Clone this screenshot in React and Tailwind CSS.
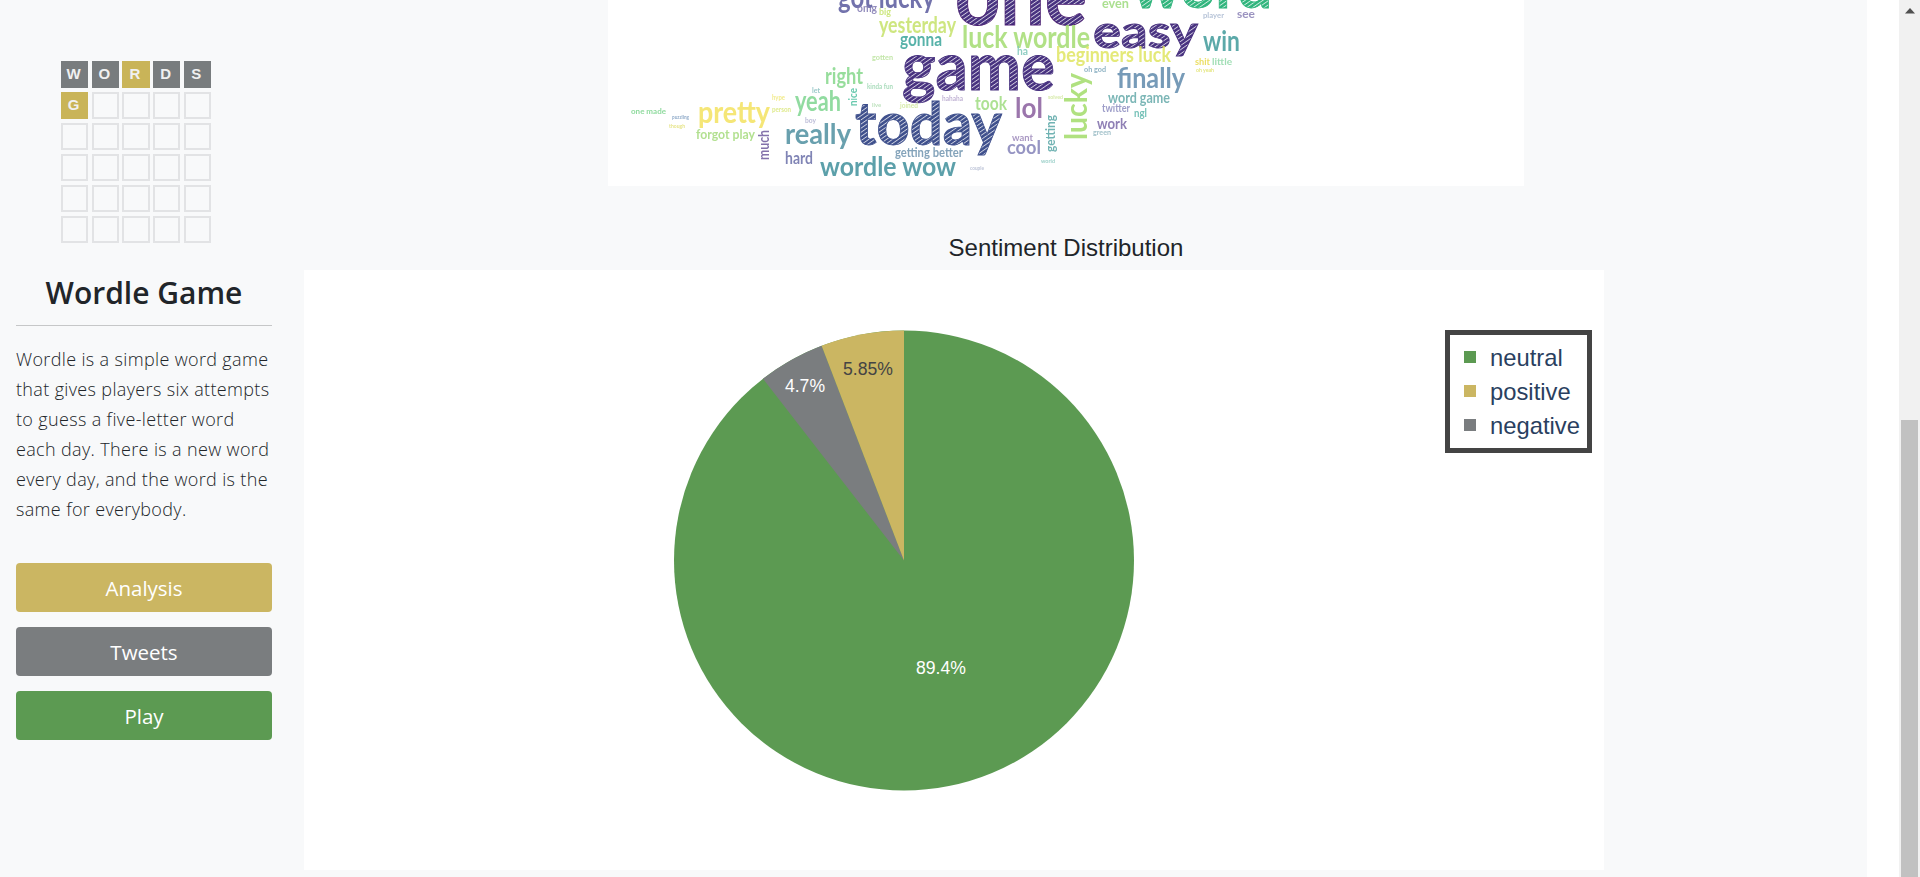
import React from 'react';

const tiles = [
  ['W', 'grey'], ['O', 'grey'], ['R', 'gold'], ['D', 'grey'], ['S', 'grey'],
  ['G', 'gold'],
];

// x, y are page pixels read off the reference, w is the drawn width of the word
const words = [
  { t: 'word', x: 1132, y: 8, w: 140, s: 62, c: '#2fb47c', h: 'green' },
  { t: 'one', x: 955, y: 25, w: 132, s: 84, c: '#471a6e', h: 'violet' },
  { t: 'game', x: 902, y: 90, w: 153, s: 66, c: '#46307f', h: 'violet' },
  { t: 'today', x: 855, y: 145, w: 147, s: 60, c: '#3e4f8c', h: 'blue' },
  { t: 'easy', x: 1093, y: 48, w: 105, s: 46, c: '#48307e', h: 'violet' },
  { t: 'got lucky', x: 838, y: 8, w: 97, s: 26, c: '#5b5a9e' },
  { t: 'even', x: 1102, y: 8, w: 27, s: 11, c: '#9cdb7c' },
  { t: 'omg', x: 857, y: 12, w: 20, s: 9, c: '#7f78b0' },
  { t: 'big', x: 879, y: 15, w: 12, s: 8, c: '#c4e36a' },
  { t: 'yesterday', x: 879, y: 33, w: 77, s: 19, c: '#c5e26a' },
  { t: 'gonna', x: 900, y: 46, w: 42, s: 17, c: '#3aa59a' },
  { t: 'luck wordle', x: 962, y: 48, w: 128, s: 26, c: '#a3dc72' },
  { t: 'win', x: 1203, y: 51, w: 37, s: 24, c: '#3f9a9a' },
  { t: 'see', x: 1237, y: 18, w: 18, s: 10, c: '#8a80b5' },
  { t: 'player', x: 1203, y: 18, w: 21, s: 7, c: '#a9b8d0' },
  { t: 'ha', x: 1017, y: 55, w: 11, s: 9, c: '#7cc5b8' },
  { t: 'beginners luck', x: 1056, y: 62, w: 115, s: 18, c: '#dfe560' },
  { t: 'shit', x: 1195, y: 65, w: 15, s: 8, c: '#e8d848' },
  { t: 'little', x: 1212, y: 65, w: 20, s: 8, c: '#8fd8a8' },
  { t: 'gotten', x: 872, y: 60, w: 21, s: 6, c: '#b9e29a' },
  { t: 'oh god', x: 1084, y: 72, w: 22, s: 6, c: '#7aa5b8' },
  { t: 'oh yeah', x: 1196, y: 72, w: 18, s: 5, c: '#dfe26a' },
  { t: 'right', x: 825, y: 84, w: 38, s: 19, c: '#85d78b' },
  { t: 'finally', x: 1117, y: 88, w: 68, s: 25, c: '#5f8aab' },
  { t: 'kinda fun', x: 867, y: 89, w: 26, s: 6, c: '#9bd6b0' },
  { t: 'let', x: 812, y: 93, w: 8, s: 6, c: '#8ac0c0' },
  { t: 'hype', x: 772, y: 100, w: 13, s: 6, c: '#f0e878' },
  { t: 'word game', x: 1108, y: 103, w: 62, s: 13, c: '#64a9a9' },
  { t: 'hahaha', x: 942, y: 101, w: 21, s: 6, c: '#b6a6cc' },
  { t: 'solved', x: 1048, y: 99, w: 15, s: 5, c: '#cfe69a' },
  { t: 'live', x: 872, y: 107, w: 9, s: 5, c: '#b0dcb0' },
  { t: 'joined', x: 900, y: 108, w: 18, s: 6, c: '#cfe69a' },
  { t: 'took', x: 975, y: 110, w: 32, s: 16, c: '#9fdc80' },
  { t: 'yeah', x: 795, y: 111, w: 46, s: 24, c: '#7ed58f' },
  { t: 'person', x: 772, y: 112, w: 19, s: 6, c: '#d9e67a' },
  { t: 'twitter', x: 1102, y: 112, w: 28, s: 9, c: '#8d8dc0' },
  { t: 'one made', x: 631, y: 114, w: 35, s: 7, c: '#7ad48c' },
  { t: 'ngl', x: 1134, y: 117, w: 13, s: 9, c: '#5bb5a9' },
  { t: 'puzzling', x: 672, y: 119, w: 17, s: 4, c: '#7d9cc0' },
  { t: 'lol', x: 1015, y: 118, w: 28, s: 24, c: '#8a5e9e' },
  { t: 'pretty', x: 698, y: 123, w: 72, s: 27, c: '#f3e25f' },
  { t: 'boy', x: 805, y: 123, w: 11, s: 6, c: '#b0b0d0' },
  { t: 'though', x: 669, y: 128, w: 16, s: 4, c: '#e2df74' },
  { t: 'work', x: 1097, y: 129, w: 30, s: 13, c: '#7b6aa8' },
  { t: 'green', x: 1093, y: 135, w: 18, s: 7, c: '#8fb5c0' },
  { t: 'forgot play', x: 696, y: 139, w: 59, s: 12, c: '#a5db7c' },
  { t: 'want', x: 1012, y: 141, w: 21, s: 8, c: '#9a86b8' },
  { t: 'really', x: 785, y: 144, w: 66, s: 25, c: '#4f8fa0' },
  { t: 'cool', x: 1007, y: 154, w: 34, s: 17, c: '#8482b8' },
  { t: 'getting better', x: 895, y: 157, w: 68, s: 11, c: '#6f93ae' },
  { t: 'world', x: 1041, y: 163, w: 14, s: 5, c: '#8ac8c0' },
  { t: 'hard', x: 785, y: 164, w: 28, s: 15, c: '#6a6ea8' },
  { t: 'couple', x: 970, y: 170, w: 14, s: 4, c: '#b0b8d0' },
  { t: 'wordle wow', x: 820, y: 176, w: 136, s: 23, c: '#3f8f9b' },
];

const rotated = [
  { t: 'lucky', x: 1087, y: 140, w: 67, s: 27, c: '#a2dc6a' },
  { t: 'getting', x: 1055, y: 152, w: 37, s: 11, c: '#58a6a6' },
  { t: 'much', x: 769, y: 160, w: 30, s: 13, c: '#6e5a9c' },
  { t: 'nice', x: 857, y: 106, w: 18, s: 9, c: '#4fc0a0' },
];

const hatches = [
  { id: 'violet', c: '#46307f' },
  { id: 'blue', c: '#3e4f8c' },
  { id: 'green', c: '#2fb47c' },
];

function WordCloud() {
  return (
    <svg width="916" height="186" viewBox="608 0 916 186" className="block bg-white" style={{ fontFamily: 'Lato, sans-serif' }}>
      <defs>
        {hatches.map((h) => (
          <pattern key={h.id} id={h.id} width="3.4" height="3.4" patternUnits="userSpaceOnUse" patternTransform="rotate(-35)">
            <rect width="3.4" height="3.4" fill={h.c} />
            <rect width="3.4" height="0.9" fill="#ffffff" fillOpacity="0.75" />
          </pattern>
        ))}
        <filter id="soft">
          <feGaussianBlur stdDeviation="0.45" />
        </filter>
      </defs>
      <g filter="url(#soft)" fontWeight="700">
        {words.map((w) => (
          <text
            key={w.t}
            x={w.x}
            y={w.y}
            fontSize={w.h ? w.s : w.s * 1.15}
            fill={w.h ? `url(#${w.h})` : w.c}
            fillOpacity={w.h ? 1 : 0.85}
            stroke={w.h ? w.c : 'none'}
            strokeWidth="0.8"
            textLength={w.w}
            lengthAdjust="spacingAndGlyphs"
          >
            {w.t}
          </text>
        ))}
        {rotated.map((w) => (
          <text
            key={w.t}
            transform={`translate(${w.x} ${w.y}) rotate(-90)`}
            fontSize={w.s * 1.15}
            fill={w.c}
            fillOpacity="0.85"
            textLength={w.w}
            lengthAdjust="spacingAndGlyphs"
          >
            {w.t}
          </text>
        ))}
      </g>
    </svg>
  );
}

function PieChart() {
  return (
    <svg width="1300" height="600" viewBox="304 270 1300 600" className="block" style={{ fontFamily: '"Liberation Sans", Arial, sans-serif' }}>
      <circle cx="904" cy="560.5" r="230" fill="#5c9a52" />
      <path d="M904 560.5 L763 378.8 A230 230 0 0 1 821.6 345.8 Z" fill="#7a7d7f" />
      <path d="M904 560.5 L821.6 345.8 A230 230 0 0 1 904 330.5 Z" fill="#cbb662" />
      <text x="868" y="374.5" textAnchor="middle" fontSize="17.6" fill="#444444">5.85%</text>
      <text x="805" y="391.5" textAnchor="middle" fontSize="17.6" fill="#ffffff">4.7%</text>
      <text x="941" y="674" textAnchor="middle" fontSize="17.6" fill="#ffffff">89.4%</text>
      <rect x="1447.5" y="332.5" width="142" height="118" fill="#ffffff" stroke="#444444" strokeWidth="5" />
      <rect x="1464" y="351" width="12" height="12" fill="#5c9a52" />
      <rect x="1464" y="385" width="12" height="12" fill="#cbb662" />
      <rect x="1464" y="419" width="12" height="12" fill="#7a7d7f" />
      <text x="1490" y="366" fontSize="23.8" fill="#2a3f5f">neutral</text>
      <text x="1490" y="400" fontSize="23.8" fill="#2a3f5f">positive</text>
      <text x="1490" y="434" fontSize="23.8" fill="#2a3f5f">negative</text>
    </svg>
  );
}

function Logo() {
  const cells = Array.from({ length: 30 }, (_, i) => tiles[i] || null);
  return (
    <div className="ml-[61px] grid grid-cols-[repeat(5,27.33px)] grid-rows-[repeat(6,27.33px)] gap-x-[3.33px] gap-y-[3.6px] font-['Liberation_Sans',sans-serif]">
      {cells.map((cell, i) => {
        if (!cell) return <div key={i} className="border-2 border-[#e2e3e5]" />;
        return (
          <div
            key={i}
            className={`flex items-center justify-center pr-[2px] text-[15px] font-bold text-[#f0f0f0] ${cell[1] === 'gold' ? 'bg-[#c9b458]' : 'bg-[#787c7e]'}`}
          >
            {cell[0]}
          </div>
        );
      })}
    </div>
  );
}

function Sidebar() {
  return (
    <aside className="flex w-[304px] shrink-0 flex-col pt-[61px] font-['Open_Sans',sans-serif]">
      <Logo />
      <h1 className="mt-[29px] w-[288px] text-center text-[30px] leading-[42px] font-semibold text-[#212529]">
        Wordle Game
      </h1>
      <hr className="mx-4 mt-[11px] w-[256px] border-[#c6c7c8]" />
      <p className="mx-4 mt-[18px] text-[18px] leading-[30px] font-light tracking-[0.35px] whitespace-nowrap text-[#212529]">
        Wordle is a simple word game<br />
        that gives players six attempts<br />
        to guess a five-letter word<br />
        each day. There is a new word<br />
        every day, and the word is the<br />
        same for everybody.
      </p>
      <div className="mx-4 mt-[39px] flex w-[256px] flex-col gap-[15px]">
        <button className="h-[49px] rounded bg-[#cbb662] pt-[2px] text-[20.5px] text-white">Analysis</button>
        <button className="h-[49px] rounded bg-[#7a7d7f] pt-[2px] text-[20.5px] text-white">Tweets</button>
        <button className="h-[49px] rounded bg-[#5c9a52] pt-[2px] text-[20.5px] text-white">Play</button>
      </div>
    </aside>
  );
}

function Scrollbar() {
  return (
    <div className="flex w-[21px] shrink-0 flex-col items-center bg-[#f1f1f1]">
      <svg width="10" height="6" viewBox="0 0 10 6" className="mt-[8px] block">
        <path d="M5 0 L10 5.5 L0 5.5 Z" fill="#505050" />
      </svg>
      <div className="mt-[406px] h-[457px] w-[17px] bg-[#c1c1c1]" />
    </div>
  );
}

export default function App() {
  return (
    <div className="flex h-[877px] w-[1920px] overflow-hidden bg-white">
      <div className="flex w-[1867px] shrink-0 bg-[#f8f9fa]">
        <Sidebar />
        <main className="flex w-[1524px] shrink-0 flex-col">
          <div className="mx-auto">
            <WordCloud />
          </div>
          <h2 className="mt-[50px] mb-[10px] text-center font-['Liberation_Sans',sans-serif] text-[24px] leading-[24px] text-[#212529]">
            Sentiment Distribution
          </h2>
          <div className="w-[1300px] bg-white">
            <PieChart />
          </div>
        </main>
      </div>
      <div className="flex-1" />
      <Scrollbar />
    </div>
  );
}
